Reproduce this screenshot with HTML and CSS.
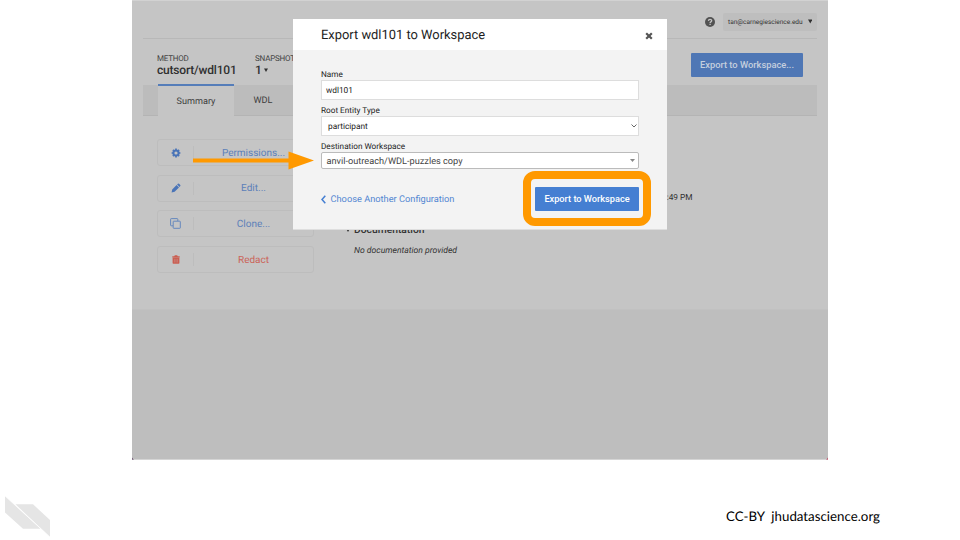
FILE: index.html
```html
<!DOCTYPE html>
<html lang="en">
<head>
<meta charset="utf-8">
<title>Export to Workspace</title>
<link rel="stylesheet" href="styles.css">
</head>
<body>
<div class="slide">
  <div class="screen">
    <main class="page">
      <header class="topbar">
        <svg class="help" viewBox="0 0 10 10"><circle cx="5" cy="5" r="5" fill="#525252"/><path d="M3.4 3.9C3.5 2.9 4.1 2.4 5 2.4c1 0 1.7.6 1.7 1.4C6.7 4.9 5.1 4.9 5.1 6M5.1 6.8v1.2" fill="none" stroke="#c5c5c5" stroke-width="1.3"/></svg>
        <div class="account"><span class="email">tan@carnegiescience.edu</span><svg class="caret" viewBox="0 0 5 5"><path d="M0 .5h5L2.5 5z" fill="#303030"/></svg></div>
      </header>
      <section class="method">
        <div class="method-name"><div class="cap">METHOD</div><div class="value">cutsort/wdl101</div></div>
        <div class="snapshot"><div class="cap">SNAPSHOT</div><div class="value">1<svg class="caret small" viewBox="0 0 5 5"><path d="M0 .5h5L2.5 5z" fill="#303030"/></svg></div></div>
        <button class="export-top">Export to Workspace...</button>
      </section>
      <nav class="tabs"><div class="tab active">Summary</div><div class="tab">WDL</div></nav>
      <div class="content">
        <aside class="actions">
          <div class="action"><div class="icon"><svg width="10" height="10" viewBox="0 0 10 10"><circle cx="5" cy="5" r="2.6" fill="none" stroke="#4a74b7" stroke-width="2"/><path d="M5 .6v1.6M5 7.8v1.6M.6 5h1.6M7.8 5h1.6M1.9 1.9l1.1 1.1M7 7l1.1 1.1M1.9 8.1l1.1-1.1M7 3l1.1-1.1" stroke="#4a74b7" stroke-width="1.7"/></svg></div><span>Permissions...</span></div>
          <div class="action"><div class="icon"><svg width="10" height="10" viewBox="0 0 10 10"><path d="M.6 9.400l.6-3L5.600 2l2.400 2.400L3.600 8.800zM6.100 1.500l.8-.8q.6-.4 1.100 0l1.300 1.300q.4.500 0 1.100l-.8.800z" fill="#4a74b7"/></svg></div><span>Edit...</span></div>
          <div class="action"><div class="icon"><svg width="11" height="11" viewBox="0 0 11 11"><path d="M3 7.800H1.200q-.6 0-.6-.6v-6q0-.6.6-.6h6q.6 0 .6.600V3" fill="none" stroke="#6688bd"/><rect x="3.200" y="3.200" width="7.100" height="7.100" rx=".5" fill="none" stroke="#6688bd"/></svg></div><span>Clone...</span></div>
          <div class="action danger"><div class="icon"><svg width="8" height="9" viewBox="0 0 8 9"><path d="M.3 1.300h2L2.800.3h2.400l.5 1h2v1.200H.3zM.6 2.800h6.800v5.200q0 .8-.8.800H1.400q-.8 0-.8-.8z" fill="#cb5d50"/><path d="M2.600 3.800v3.700M4 3.800v3.700M5.400 3.800v3.700" stroke="#c5aaa6" stroke-width=".4"/></svg></div><span>Redact</span></div>
        </aside>
        <section class="details">
          <div class="created">3:49 PM</div>
          <div class="doc-title"><svg class="caret doc" viewBox="0 0 5 5"><path d="M0 .5h5L2.5 5z" fill="#303030"/></svg><span>Documentation</span></div>
          <div class="doc-text">No documentation provided</div>
        </section>
      </div>
    </main>
    <svg class="corner left" viewBox="0 0 3 3"><path d="M0 0v3h3Q.5 2.500 0 0z" fill="#4b2850"/></svg>
    <svg class="corner right" viewBox="0 0 3 3"><path d="M3 0v3H0Q2.500 2.500 3 0z" fill="#c3284d"/></svg>
    <div class="modal">
      <div class="modal-head"><span class="modal-title">Export wdl101 to Workspace</span><svg class="close" viewBox="0 0 8 8"><path d="M1.200 1.200l5.600 5.600M6.800 1.200L1.200 6.800" stroke="#555" stroke-width="2.200"/></svg></div>
      <div class="modal-body">
        <label class="label first">Name</label>
        <div class="field"><span>wdl101</span></div>
        <label class="label">Root Entity Type</label>
        <div class="field select"><span>participant</span><svg width="6" height="4" viewBox="0 0 6 4"><path d="M.5.500L3 3 5.500.500" fill="none" stroke="#666"/></svg></div>
        <label class="label">Destination Workspace</label>
        <div class="field combo"><span>anvil-outreach/WDL-puzzles copy</span><svg width="5" height="3" viewBox="0 0 5 3"><path d="M0 0h5L2.500 3z" fill="#888"/></svg></div>
        <div class="modal-foot">
          <a class="back"><svg width="5" height="9" viewBox="0 0 5 9"><path d="M4.300.700L1 4.500l3.300 3.800" fill="none" stroke="#457fd2" stroke-width="1.500"/></svg><span>Choose Another Configuration</span></a>
          <button class="export">Export to Workspace</button>
        </div>
      </div>
    </div>
    <svg class="arrow" viewBox="0 0 121 20"><path d="M0 7.500h95.500V.6L121 9.600 95.500 18.600v-7.100H0z" fill="#ff9900"/></svg>
    <div class="ring"></div>
  </div>
  <footer class="footer">
    <svg class="logo" viewBox="0 0 46 42"><path d="M0 0L35.500 32.800H18L0 16.500zM10.500 8.300H28L45 24v17z" fill="#e5e5e5"/><path d="M0 0l45 41" stroke="#fff" stroke-width=".6"/></svg>
    <span class="credit">CC-BY&nbsp; jhudatascience.org</span>
  </footer>
</div>
</body>
</html>
```
FILE: styles.css
```css
* { box-sizing: border-box; }
body { margin: 0; background: #fff; font-family: Roboto, "Liberation Sans", sans-serif; color: #333; text-rendering: geometricPrecision; }
button { font-family: inherit; border: 0; padding: 0; cursor: pointer; }
svg { display: block; flex: none; }
span, .value, .cap { white-space: nowrap; }
.slide { width: 960px; height: 540px; overflow: hidden; }
.screen { position: relative; width: 696px; height: 460px; margin-left: 132px; background: #bebebe; border-bottom: 1px solid #d5d5d5; }
.page { height: 310px; padding: 0 11px; background: #c5c5c5; border-top: 1px solid #d2d2d2; border-bottom: 1px solid #c1c1c1; }

.topbar { height: 38px; display: flex; align-items: center; justify-content: flex-end; gap: 8px; padding-top: 4px; border-bottom: 1px solid #b8b8b8; }
.help { width: 10px; height: 10px; }
.account { width: 94px; height: 18px; display: flex; align-items: center; justify-content: space-between; padding: 0 5px 0 5px; background: #bebebe; border-radius: 2px; font-size: 6.500px; color: #333; }
.caret { width: 4.500px; height: 4.500px; }

.method { height: 46px; display: flex; padding: 0 14px; }
.method-name, .snapshot { padding-top: 14px; }
.method-name { width: 98px; }
.cap { font-size: 8px; line-height: 11px; letter-spacing: -0.200px; color: #444; }
.value { display: flex; align-items: center; font-size: 12px; line-height: 12px; font-weight: 500; color: #303030; }
.method-name .value { letter-spacing: -0.200px; }
.caret.small { width: 4px; height: 4px; margin-left: 2px; }
.export-top { width: 112px; height: 24px; margin: 14px 0 0 auto; padding-bottom: 2px; border-radius: 1px; background: #4f77b5; color: #c5cfde; font-size: 9.300px; font-weight: 500; }

.tabs { height: 31px; display: flex; padding-left: 15px; background: #bcbcbc; border-bottom: 1px solid #b4b4b4; }
.tab { width: 58px; height: 31px; display: flex; align-items: center; justify-content: center; padding-top: 1px; font-size: 9.100px; color: #3d3d3d; }
.tab.active { width: 76px; height: 32px; margin-top: -1px; background: #c5c5c5; border-top: 2px solid #557db9; }

.content { display: flex; padding: 23px 14px 0; }
.actions { width: 157px; display: flex; flex-direction: column; gap: 8.600px; }
.action { height: 27px; display: flex; align-items: center; border: 1px solid #bdbdbd; border-radius: 3px; color: #5c80b9; font-size: 10px; }
.action .icon { width: 36px; height: 13px; display: flex; align-items: center; justify-content: center; border-right: 1px solid #bdbdbd; }
.action > span { flex: 1; padding-top: 1.600px; text-align: center; }
.action.danger { color: #cb6459; }
.details { padding-left: 32px; }
.created { padding: 53px 0 0 316px; font-size: 8.300px; line-height: 12px; white-space: nowrap; }
.doc-title { display: flex; align-items: center; gap: 4px; margin-top: 19px; font-size: 10.300px; line-height: 13px; font-weight: 500; }
.caret.doc { width: 4px; height: 4px; }
.doc-text { padding: 9px 0 0 8px; font-size: 8.600px; line-height: 12px; font-style: italic; }

.corner { position: absolute; bottom: -1px; width: 3px; height: 3px; }
.corner.left { left: 0; width: 2px; }
.corner.right { right: 0; width: 2px; }

.modal { position: absolute; left: 161px; top: 19px; width: 374px; height: 211px; background: #f3f3f3; border-bottom: 1px solid #dedede; color: #222; }
.modal-head { height: 31px; display: flex; align-items: center; justify-content: space-between; padding: 0 14px 0 28px; background: #fff; }
.modal-title { padding-top: 2px; font-size: 12.900px; color: #1c1c1c; }
.close { width: 8px; height: 8px; margin-top: 3px; }
.modal-body { padding: 18px 28px 0; }
.label { display: block; height: 12px; font-size: 8.200px; line-height: 12px; }
.label.first { line-height: 14px; }
.field { height: 20px; margin-bottom: 5px; display: flex; align-items: center; justify-content: space-between; padding: 0 5px 0 4px; background: #fff; border: 1px solid #ddd; font-size: 8.300px; }
.field span { padding-top: 1.500px; }
.field.select { margin: -1px 0 5px; padding: 0 1px 0 6px; }
.field.combo { height: 17px; margin-top: -1px; padding: 0 3px 0 4.500px; border-color: #bbb; border-radius: 2px; font-size: 9.200px; color: #444; }
.modal-foot { height: 24px; margin-top: 18px; display: flex; align-items: center; justify-content: space-between; }
.back { display: flex; align-items: center; gap: 4.500px; color: #5286d2; font-size: 9.250px; }
.export { width: 104px; height: 24px; padding-bottom: 1px; background: #457fd2; color: #fff; font-size: 9.200px; font-weight: 500; border-radius: 1px; }

.arrow { position: absolute; left: 61px; top: 151px; width: 121px; height: 20px; }
.ring { position: absolute; left: 391px; top: 171px; width: 128px; height: 55px; border: 8px solid #ff9900; border-radius: 12px; }

.footer { height: 80px; display: flex; align-items: flex-start; justify-content: space-between; padding: 36px 80px 0 4.500px; }
.logo { width: 46px; height: 42px; }
.credit { margin-top: 12px; font-family: Lato, sans-serif; font-size: 13.300px; line-height: 16px; color: #000; }
```
